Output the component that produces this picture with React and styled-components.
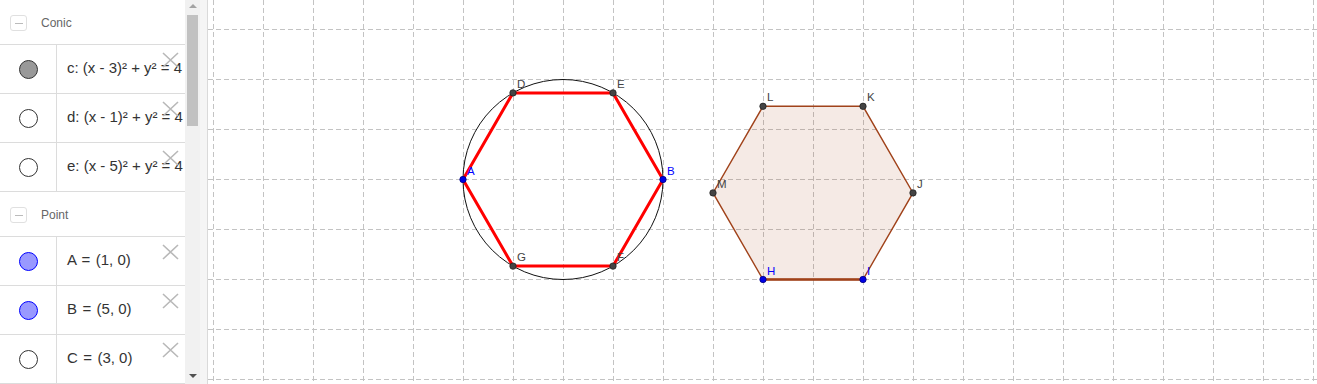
import styled, { createGlobalStyle } from "styled-components";

const GlobalStyle = createGlobalStyle`
  html, body {
    margin: 0;
    padding: 0;
    background: #fff;
    overflow: hidden;
  }
  #root {
    width: 1317px;
    height: 384px;
  }
`;

const Frame = styled.div`
  display: flex;
  width: 1317px;
  height: 384px;
  font-family: "Liberation Sans", Arial, sans-serif;
`;

const AlgebraPanel = styled.div`
  display: flex;
  width: 200px;
  height: 100%;
  flex-shrink: 0;
`;

const List = styled.div`
  width: 185px;
  height: 100%;
  overflow: hidden;
  background: #fff;
`;

const GroupHeader = styled.div`
  display: flex;
  align-items: center;
  gap: 14px;
  height: 45px;
  padding-left: 10px;
  padding-top: 2px;
  box-sizing: border-box;
  border-bottom: 1px solid #dcdcdc;
  font-size: 12px;
  color: #666;
`;

const CollapseBox = styled.span`
  display: flex;
  align-items: center;
  justify-content: center;
  width: 15px;
  height: 14px;
  border: 1px solid #e0e0e0;
  border-radius: 3px;
  &::after {
    content: "";
    width: 8px;
    height: 1px;
    background: #bbb;
  }
`;

const Row = styled.div`
  position: relative;
  display: flex;
  height: 49px;
  box-sizing: border-box;
  border-bottom: 1px solid #dcdcdc;
`;

const MarkerCell = styled.div`
  display: flex;
  align-items: center;
  justify-content: center;
  width: 56px;
  flex-shrink: 0;
  border-right: 1px solid #dcdcdc;
`;

const Marker = styled.span`
  width: 17px;
  height: 17px;
  border-radius: 50%;
  border: 1px solid ${(p) => p.$stroke};
  background: ${(p) => p.$fill};
`;

const Formula = styled.div`
  display: flex;
  align-items: center;
  padding-left: 10px;
  padding-bottom: 3px;
  white-space: pre;
  font-size: 15px;
  color: #333;
`;

const DeleteButton = styled.span`
  position: absolute;
  top: 7px;
  left: 162px;
  width: 17px;
  height: 16px;
  color: #b8b8b8;
`;

const Scrollbar = styled.div`
  display: flex;
  flex-direction: column;
  align-items: center;
  width: 15px;
  height: 100%;
  background: #f1f1f1;
  box-sizing: border-box;
  padding-top: 4px;
`;

const ArrowUp = styled.span`
  width: 0;
  height: 0;
  border-left: 4px solid transparent;
  border-right: 4px solid transparent;
  border-bottom: 4px solid #a3a3a3;
`;

const Thumb = styled.div`
  width: 11px;
  height: 111px;
  margin-top: 7px;
  background: #c1c1c1;
`;

const ArrowDown = styled.span`
  margin-top: auto;
  margin-bottom: 6px;
  width: 0;
  height: 0;
  border-left: 4px solid transparent;
  border-right: 4px solid transparent;
  border-top: 4px solid #505050;
`;

const Splitter = styled.div`
  width: 7px;
  flex-shrink: 0;
  background: #f5f5f5;
  border-right: 1px solid #dadada;
`;

const Graphics = styled.div`
  flex: 1;
  height: 100%;
  overflow: hidden;
  background: #fff;
`;

const Label = styled.text`
  font-family: "Liberation Sans", Arial, sans-serif;
  font-size: 11.5px;
  fill: ${(p) => p.$color || "#444"};
`;

const groups = [
  {
    title: "Conic",
    items: [
      { text: "c: (x - 3)² + y² = 4", fill: "#999", stroke: "#333" },
      { text: "d: (x - 1)² + y² = 4", fill: "#fff", stroke: "#333" },
      { text: "e: (x - 5)² + y² = 4", fill: "#fff", stroke: "#333" },
    ],
  },
  {
    title: "Point",
    items: [
      { text: "A \u200A= \u200A(1, 0)", fill: "#9999ff", stroke: "#0000ff" },
      { text: "B \u200A= \u200A(5, 0)", fill: "#9999ff", stroke: "#0000ff" },
      { text: "C \u200A= \u200A(3, 0)", fill: "#fff", stroke: "#333" },
    ],
  },
];

// graphics origin: page x 413 -> svg x 205, y 179, 50px per unit
const OX = 205;
const OY = 179.5;
const U = 50;
const px = (x) => OX + x * U;
const py = (y) => OY - y * U;
const S3 = Math.sqrt(3);

const redHex = [
  { n: "A", x: 1, y: 0, blue: true },
  { n: "D", x: 2, y: S3 },
  { n: "E", x: 4, y: S3 },
  { n: "B", x: 5, y: 0, blue: true },
  { n: "F", x: 4, y: -S3 },
  { n: "G", x: 2, y: -S3 },
];

const brownHex = [
  { n: "H", x: 7, y: -2, blue: true },
  { n: "I", x: 9, y: -2, blue: true },
  { n: "J", x: 10, y: -2 + S3 },
  { n: "K", x: 9, y: -2 + 2 * S3 },
  { n: "L", x: 7, y: -2 + 2 * S3 },
  { n: "M", x: 6, y: -2 + S3 },
];

const pts = (list) => list.map((p) => `${px(p.x)},${py(p.y)}`).join(" ");

function CrossIcon() {
  return (
    <svg width="17" height="16" viewBox="0 0 17 16">
      <path d="M1 1 L16 15 M16 1 L1 15" stroke="currentColor" strokeWidth="1.6" fill="none" />
    </svg>
  );
}

function Grid() {
  const lines = [];
  for (let i = 0; i < 23; i++) {
    const x = 5 + i * U;
    lines.push(<line key={"v" + i} x1={x} y1={0} x2={x} y2={384} />);
  }
  for (let j = 0; j < 8; j++) {
    const y = 29 + j * U;
    lines.push(<line key={"h" + j} x1={0} y1={y} x2={1110} y2={y} />);
  }
  return (
    <g stroke="#c3c3c3" strokeWidth="1" strokeDasharray="5,3" shapeRendering="crispEdges">
      {lines}
    </g>
  );
}

function PointDot({ p }) {
  const cx = px(p.x);
  const cy = py(p.y);
  return (
    <g>
      <circle
        cx={cx}
        cy={cy}
        r="3.2"
        fill={p.blue ? "#0000e6" : "#444"}
        stroke={p.blue ? "#000080" : "#222"}
        strokeWidth="0.8"
      />
      <Label x={cx + 4} y={cy - 5} $color={p.blue ? "#0000ff" : "#444"}>
        {p.n}
      </Label>
    </g>
  );
}

export default function App() {
  return (
    <>
      <GlobalStyle />
      <Frame>
        <AlgebraPanel>
          <List>
            {groups.map((g) => (
              <div key={g.title}>
                <GroupHeader>
                  <CollapseBox />
                  {g.title}
                </GroupHeader>
                {g.items.map((it) => (
                  <Row key={it.text}>
                    <MarkerCell>
                      <Marker $fill={it.fill} $stroke={it.stroke} />
                    </MarkerCell>
                    <Formula>{it.text}</Formula>
                    <DeleteButton>
                      <CrossIcon />
                    </DeleteButton>
                  </Row>
                ))}
              </div>
            ))}
          </List>
          <Scrollbar>
            <ArrowUp />
            <Thumb />
            <ArrowDown />
          </Scrollbar>
        </AlgebraPanel>
        <Splitter />
        <Graphics>
          <svg width="1109" height="384">
            <Grid />
            <circle cx={px(3)} cy={py(0)} r={2 * U} fill="none" stroke="#111" strokeWidth="1" />
            <polygon points={pts(redHex)} fill="none" stroke="#ff0000" strokeWidth="3" strokeLinejoin="round" />
            <polygon
              points={pts(brownHex)}
              fill="rgba(153, 51, 0, 0.1)"
              stroke="#a0421a"
              strokeWidth="1.4"
            />
            <line
              x1={px(7)}
              y1={py(-2)}
              x2={px(9)}
              y2={py(-2)}
              stroke="#a0421a"
              strokeWidth="2.5"
            />
            {redHex.map((p) => (
              <PointDot key={p.n} p={p} />
            ))}
            {brownHex.map((p) => (
              <PointDot key={p.n} p={p} />
            ))}
          </svg>
        </Graphics>
      </Frame>
    </>
  );
}
